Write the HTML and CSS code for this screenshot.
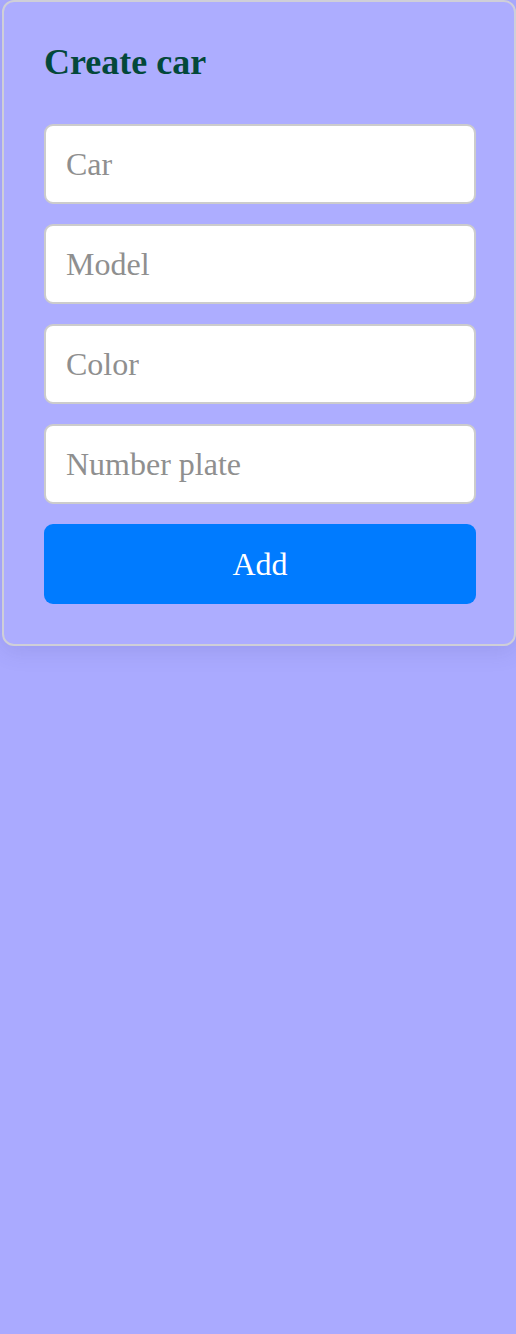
FILE: index.html
```html
<!DOCTYPE html>
<html lang="en">
<head>
<meta charset="utf-8">
<title>Create car</title>
<link rel="stylesheet" href="styles.css">
</head>
<body>
  <form class="card">
    <h2 class="title">Create car</h2>
    <input class="field" type="text" placeholder="Car">
    <input class="field" type="text" placeholder="Model">
    <input class="field" type="text" placeholder="Color">
    <input class="field" type="text" placeholder="Number plate">
    <button class="btn" type="button">Add</button>
  </form>
</body>
</html>
```
FILE: styles.css
```css
html, body {
  margin: 0;
  padding: 0;
  background: #aaaaff;
  overflow-x: hidden;
}
body {
  min-height: 100vh;
  font-family: "Liberation Serif", "Times New Roman", serif;
}
.card {
  box-sizing: border-box;
  margin: 0 0 0 2px;
  width: 514px;
  padding: 40px 38px 40px 40px;
  background: #adadff;
  border: 2px solid #cfcfd8;
  border-radius: 12px;
  box-shadow: 0 6px 22px rgba(60, 60, 120, 0.12);
  display: flex;
  flex-direction: column;
  gap: 20px;
}
.title {
  margin: 0 0 21px;
  font-size: 36px;
  font-weight: bold;
  line-height: 41px;
  color: #03483a;
}
.field {
  box-sizing: border-box;
  height: 80px;
  width: 100%;
  padding: 0 20px;
  border: 2px solid #cccccc;
  border-radius: 9px;
  background: #ffffff;
  font-family: "Liberation Serif", "Times New Roman", serif;
  font-size: 32px;
  color: #333;
  outline: none;
}
.field::placeholder {
  color: #8f8f8f;
}
.btn {
  height: 80px;
  width: 100%;
  border: none;
  border-radius: 9px;
  background: #007bff;
  color: #ffffff;
  font-family: "Liberation Serif", "Times New Roman", serif;
  font-size: 32px;
  cursor: pointer;
}
```
